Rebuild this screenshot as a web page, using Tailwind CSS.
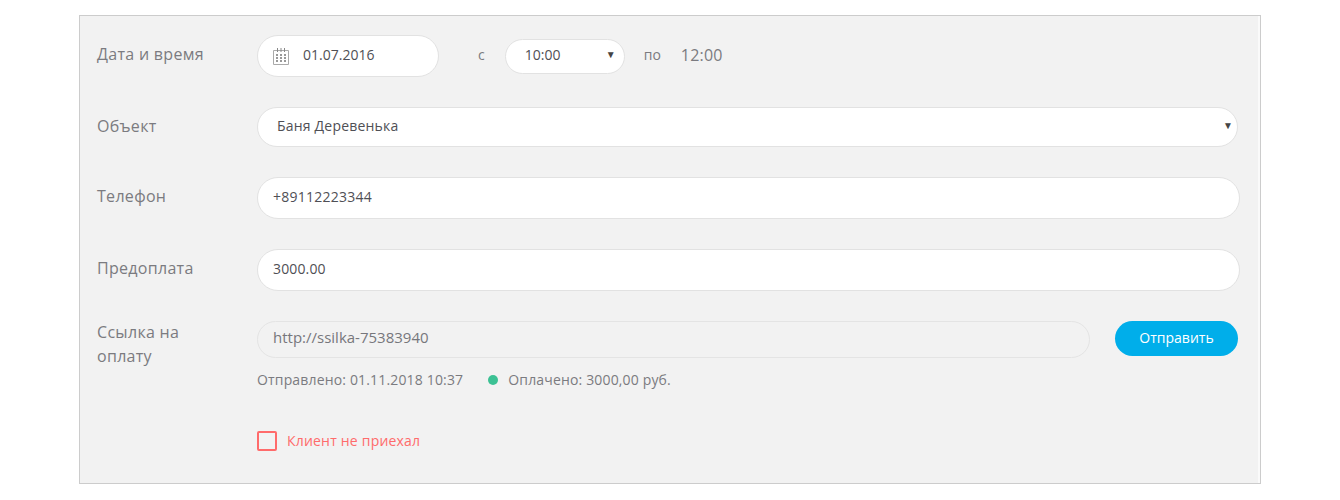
<!DOCTYPE html>
<html lang="ru">
<head>
    <meta charset="UTF-8">
    <title>Бронирование</title>
    <script src="https://cdn.jsdelivr.net/npm/@tailwindcss/browser@4"></script>
</head>
<body class="bg-white font-['Open_Sans',sans-serif] text-[14px] text-[#4f4f55]">
<div class="h-[500px] overflow-hidden pt-[15px]">
    <form class="ml-[79px] h-[469px] w-[1182px] border border-[#ccc] bg-[#fafafa]">
        <div class="mr-[2px] h-full bg-[#f2f2f2] pl-[17px]">
            <!-- Date -->
            <div class="flex h-[61px] items-end">
                <div class="w-[160px] pb-[11px] text-[16px] tracking-[0.3px] text-[#7b7b80]">Дата и время</div>
                <div class="flex h-[42px] w-[182px] items-center rounded-full border border-[#e2e2e2] bg-white pl-[15px]">
                    <svg class="h-[17px] w-[16px]" viewBox="0 0 16 17" fill="none" stroke="#aaa">
                        <path d="M.5 2.500h15v14H.5z"/>
                        <path d="M4.500 0v4M8 0v4M11.500 0v4" stroke="#888"/>
                        <path d="M3 6h2v2H3zM7 6h2v2H7zM11 6h2v2h-2zM3 9h2v2H3zM7 9h2v2H7zM11 9h2v2h-2zM3 12h2v2H3zM7 12h2v2H7zM11 12h2v2h-2z" fill="#999" stroke="none"/>
                    </svg>
                    <span class="ml-[14px] pb-[4px]">01.07.2016</span>
                </div>
                <div class="flex h-[42px] items-center">
                    <span class="ml-[39px] pb-[4px] text-[#7b7b80]">с</span>
                    <div class="relative ml-[20px] mt-[1px] flex h-[35px] w-[120px] items-center rounded-full border border-[#e2e2e2] bg-white pb-[5px] pl-[19px]">10:00<span class="absolute right-[8px] text-[10px] text-[#444]">▼</span></div>
                    <span class="ml-[19px] pb-[4px] text-[#7b7b80]">по</span>
                    <span class="ml-[20px] pb-[2px] text-[16px] tracking-[0.2px] text-[#7b7b80]">12:00</span>
                </div>
            </div>
            <!-- Object -->
            <div class="mt-[30px] flex items-center">
                <div class="w-[160px] pb-[2px] text-[16px] tracking-[0.3px] text-[#7b7b80]">Объект</div>
                <div class="relative flex h-[40px] w-[981px] items-center rounded-full border border-[#e2e2e2] bg-white pb-[4px] pl-[19px] tracking-[0.2px]">Баня Деревенька<span class="absolute right-[4px] text-[10px] text-[#444]">▼</span></div>
            </div>
            <!-- Phone -->
            <div class="mt-[30px] flex items-center">
                <div class="w-[160px] pb-[4px] text-[16px] tracking-[0.3px] text-[#7b7b80]">Телефон</div>
                <div class="flex h-[42px] w-[983px] items-center rounded-full border border-[#e2e2e2] bg-white pb-[4px] pl-[15px] tracking-[0.25px]">+89112223344</div>
            </div>
            <!-- Prepayment -->
            <div class="mt-[30px] flex items-center">
                <div class="w-[160px] pb-[4px] text-[16px] tracking-[0.3px] text-[#7b7b80]">Предоплата</div>
                <div class="flex h-[42px] w-[983px] items-center rounded-full border border-[#e2e2e2] bg-white pb-[4px] pl-[15px] tracking-[0.15px]">3000.00</div>
            </div>
            <!-- Payment link -->
            <div class="mt-[30px] flex">
                <div class="-mt-[1px] w-[160px] text-[16px] leading-[24px] tracking-[0.3px] text-[#7b7b80]">Ссылка на<br>оплату</div>
                <div>
                    <div class="flex items-start">
                        <div class="flex h-[37px] w-[833px] items-center rounded-full border border-[#e4e4e4] pb-[4px] pl-[15px] text-[15px] text-[#77777c]">http://ssilka-75383940</div>
                        <button type="button" class="ml-[25px] h-[35px] w-[123px] rounded-full bg-[#00aeea] pb-[3px] text-white">Отправить</button>
                    </div>
                    <div class="mt-[11px] flex items-center tracking-[0.16px] text-[#7b7b80]">
                        <span>Отправлено: 01.11.2018 10:37</span>
                        <span class="ml-[25px] h-[10px] w-[10px] rounded-full bg-[#3cc194]"></span>
                        <span class="ml-[10px]">Оплачено: 3000,00 руб.</span>
                    </div>
                    <label class="mt-[40px] flex items-center text-[#ff6b6b]">
                        <span class="h-[20px] w-[20px] rounded-[2px] border-2 border-[#ff6b6b]"></span>
                        <span class="ml-[10px] tracking-[0.2px]">Клиент не приехал</span>
                    </label>
                </div>
            </div>
        </div>
    </form>
</div>
</body>
</html>
